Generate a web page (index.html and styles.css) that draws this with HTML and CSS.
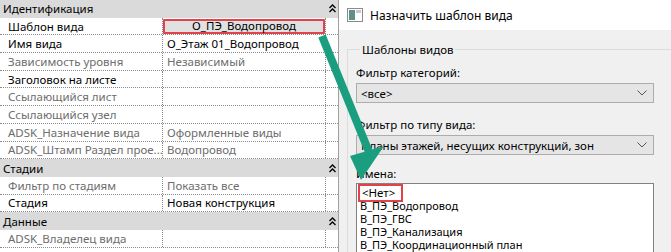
FILE: index.html
```html
<!DOCTYPE html>
<html lang="ru">
<head>
  <meta charset="UTF-8">
  <title>Назначить шаблон вида</title>
  <link rel="stylesheet" href="styles.css">
</head>
<body>
  <div class="props">
    <div class="group">
      <span class="name">Идентификация</span>
      <span class="fold"><svg width="7" height="9" viewBox="0 0 7 9"><path d="M0.5 4 L3.5 1 L6.5 4 M0.5 8 L3.5 5 L6.5 8" fill="none" stroke="#000" stroke-width="1.3"/></svg></span>
    </div>
    <div class="row">
      <span class="key">Шаблон вида</span>
      <span class="val picked"><span class="pick">О_ПЭ_Водопровод</span></span>
      <span class="end"></span>
    </div>
    <div class="row">
      <span class="key">Имя вида</span>
      <span class="val">О_Этаж 01_Водопровод</span>
      <span class="end"></span>
    </div>
    <div class="row off">
      <span class="key">Зависимость уровня</span>
      <span class="val">Независимый</span>
      <span class="end"></span>
    </div>
    <div class="row">
      <span class="key">Заголовок на листе</span>
      <span class="val"></span>
      <span class="end"></span>
    </div>
    <div class="row off">
      <span class="key">Ссылающийся лист</span>
      <span class="val"></span>
      <span class="end"></span>
    </div>
    <div class="row off">
      <span class="key">Ссылающийся узел</span>
      <span class="val"></span>
      <span class="end"></span>
    </div>
    <div class="row off">
      <span class="key">ADSK_Назначение вида</span>
      <span class="val">Оформленные виды</span>
      <span class="end"></span>
    </div>
    <div class="row off">
      <span class="key">ADSK_Штамп Раздел прое...</span>
      <span class="val">Водопровод</span>
      <span class="end"></span>
    </div>
    <div class="group">
      <span class="name">Стадии</span>
      <span class="fold"><svg width="7" height="9" viewBox="0 0 7 9"><path d="M0.5 4 L3.5 1 L6.5 4 M0.5 8 L3.5 5 L6.5 8" fill="none" stroke="#000" stroke-width="1.3"/></svg></span>
    </div>
    <div class="row off">
      <span class="key">Фильтр по стадиям</span>
      <span class="val">Показать все</span>
      <span class="end"></span>
    </div>
    <div class="row">
      <span class="key">Стадия</span>
      <span class="val">Новая конструкция</span>
      <span class="end"></span>
    </div>
    <div class="group">
      <span class="name">Данные</span>
      <span class="fold"><svg width="7" height="9" viewBox="0 0 7 9"><path d="M0.5 4 L3.5 1 L6.5 4 M0.5 8 L3.5 5 L6.5 8" fill="none" stroke="#000" stroke-width="1.3"/></svg></span>
    </div>
    <div class="row off">
      <span class="key">ADSK_Владелец вида</span>
      <span class="val"></span>
      <span class="end"></span>
    </div>
  </div>

  <div class="dialog">
    <div class="titlebar">
      <svg class="app-icon" width="16" height="14" viewBox="0 0 16 14">
        <rect x="0.5" y="0.5" width="15" height="13" fill="#fff" stroke="#8a8a8a"/>
        <rect x="2" y="2" width="6" height="10" fill="#5f8f8a"/>
        <rect x="9" y="2" width="5" height="3" fill="#c8c8c8"/>
      </svg>
      <span>Назначить шаблон вида</span>
    </div>
    <div class="body">
      <fieldset class="box">
        <legend>Шаблоны видов</legend>
        <div class="label first">Фильтр категорий:</div>
        <div class="combo">
          <span>&lt;все&gt;</span>
          <svg width="10" height="6" viewBox="0 0 10 6"><path d="M0.5 0.5 L5 5 L9.5 0.5" fill="none" stroke="#555" stroke-width="1"/></svg>
        </div>
        <div class="label">Фильтр по типу вида:</div>
        <div class="combo">
          <span>Планы этажей, несущих конструкций, зон</span>
          <svg width="10" height="6" viewBox="0 0 10 6"><path d="M0.5 0.5 L5 5 L9.5 0.5" fill="none" stroke="#555" stroke-width="1"/></svg>
        </div>
        <div class="label names">Имена:</div>
        <ul class="list">
          <li><span class="mark">&lt;Нет&gt;</span></li>
          <li>В_ПЭ_Водопровод</li>
          <li>В_ПЭ_ГВС</li>
          <li>В_ПЭ_Канализация</li>
          <li>В_ПЭ_Координационный план</li>
        </ul>
      </fieldset>
    </div>
  </div>

  <svg class="arrow" width="671" height="252" viewBox="0 0 671 252">
    <line x1="322" y1="36" x2="369" y2="152" stroke="#1b9e7f" stroke-width="8"/>
    <polygon points="350,156 384,146 361,180" fill="#1b9e7f"/>
  </svg>
</body>
</html>
```

FILE: styles.css
```css
body {
  margin: 0;
  width: 671px;
  height: 252px;
  overflow: hidden;
  display: flex;
  font-family: "Noto Sans", "Open Sans", sans-serif;
  font-size: 11.5px;
  color: #000;
  background: #fff;
  position: relative;
}

/* property grid */
.props {
  width: 338px;
  flex: none;
  border-right: 1px solid #a0a0a0;
}
.group {
  height: 17.7px;
  display: flex;
  align-items: center;
  background: #dadada;
}
.group .name {
  flex: 1;
  padding-left: 3px;
}
.group .fold {
  width: 12px;
  display: flex;
  justify-content: center;
}
.row {
  height: 17.7px;
  box-sizing: border-box;
  display: grid;
  grid-template-columns: 163px 163px 1fr;
  border-bottom: 1px dotted #8c8c8c;
}
.row > span {
  display: flex;
  align-items: center;
  white-space: nowrap;
  overflow: hidden;
  border-right: 1px dotted #8c8c8c;
}
.row > .end {
  border-right: none;
}
.row .key {
  padding-left: 8px;
}
.row .val {
  padding-left: 4px;
}
.row .val.picked {
  padding: 1px 0 0 0;
  align-items: stretch;
}
.row.off {
  color: #6d6d6d;
}
.pick {
  flex: 1;
  display: flex;
  align-items: center;
  justify-content: center;
  line-height: 11px;
  padding-bottom: 2px;
  background: #e1e1e1;
  border: 2px solid #e2434b;
  border-radius: 1px;
}

/* dialog */
.dialog {
  flex: 1;
  display: flex;
  flex-direction: column;
  background: #f0f0f0;
}
.titlebar {
  height: 30px;
  flex: none;
  background: #fff;
  display: flex;
  align-items: center;
  gap: 7px;
  padding-left: 8px;
  font-size: 12px;
}
.app-icon {
  flex: none;
}
.body {
  flex: 1;
  padding: 12px 0 0 8px;
}
.box {
  margin: 0;
  padding: 1px 10px 0 8px;
  border: 1px solid #dcdcdc;
  border-right: none;
  min-width: 0;
}
.box legend {
  padding: 0 2px;
  margin-left: 4px;
}
.label {
  margin-top: 15px;
  height: 14px;
  line-height: 14px;
}
.label.first {
  margin-top: 8px;
}
.label.names {
  margin-top: 12px;
}
.combo {
  width: 298px;
  height: 20px;
  box-sizing: border-box;
  margin-top: 3px;
  display: flex;
  align-items: center;
  justify-content: space-between;
  padding: 0 6px 0 4px;
  background: #e5e5e5;
  border: 1px solid #adadad;
  white-space: nowrap;
}
.list {
  list-style: none;
  margin: 2px 0 0;
  padding: 2px 0 0 3px;
  width: 298px;
  height: 80px;
  box-sizing: border-box;
  background: #fff;
  border: 1px solid #828282;
}
.list li {
  height: 13px;
  line-height: 13px;
  font-size: 11px;
  white-space: nowrap;
}
.mark {
  display: inline-block;
  padding: 0 6px 1px 2px;
  margin-left: 0;
  font-size: 11.5px;
  outline: 2px solid #e2434b;
}

/* annotation arrow over both panels */
.arrow {
  position: absolute;
  left: 0;
  top: 0;
  pointer-events: none;
}
```
